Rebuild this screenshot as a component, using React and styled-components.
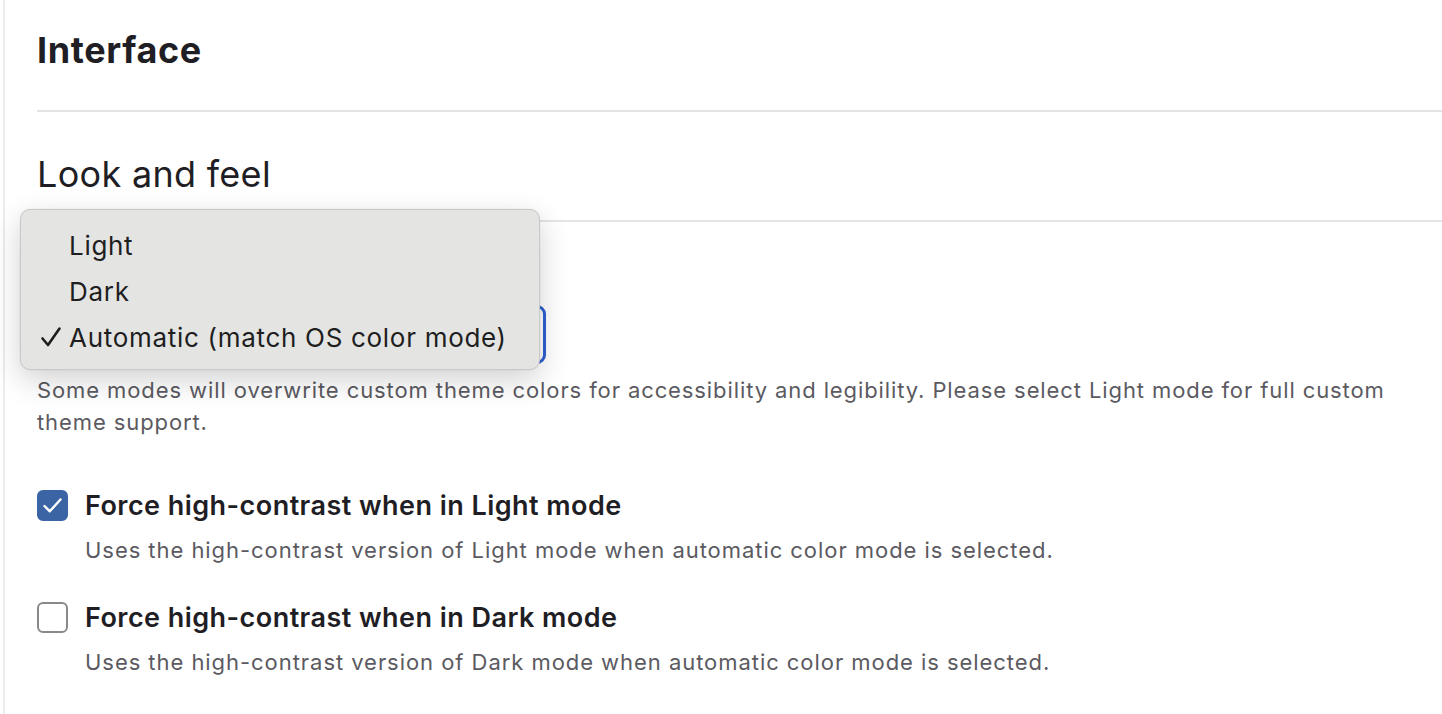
import React from 'react';
import styled, { createGlobalStyle } from 'styled-components';

const GlobalStyle = createGlobalStyle`
    * {
        box-sizing: border-box;
    }

    body {
        margin: 0;
        background: #fff;
        font-family: Inter, "Noto Sans", sans-serif;
        color: #1f1e24;
    }
`;

const modes = ['Light', 'Dark', 'Automatic (match OS color mode)'];

const checks = [
    {
        label: 'Force high-contrast when in Light mode',
        help: 'Uses the high-contrast version of Light mode when automatic color mode is selected.',
        checked: true,
    },
    {
        label: 'Force high-contrast when in Dark mode',
        help: 'Uses the high-contrast version of Dark mode when automatic color mode is selected.',
        checked: false,
    },
];

const CheckIcon = () => (
    <svg width="21" height="17" viewBox="0 0 21 17" fill="none">
        <path d="M2.5 9L7.8 14.3L18.5 2.5" stroke="#fff" strokeWidth="2.4" strokeLinecap="round" strokeLinejoin="round" />
    </svg>
);

const MenuTick = () => (
    <svg width="22" height="22" viewBox="0 0 22 22" fill="none">
        <path d="M2.5 12.5L8 19L19.5 2.5" stroke="#1e1e1e" strokeWidth="2.6" strokeLinecap="round" strokeLinejoin="round" />
    </svg>
);

const App = () => {
    const selected = modes.length - 1;

    return <Page>
        <GlobalStyle />
        <SectionTitle>Interface</SectionTitle>
        <SubTitle>Look and feel</SubTitle>

        <FormGroup>
            <FieldLabel>Color mode</FieldLabel>
            <SelectWrap>
                <Select>
                    <span>{modes[selected]}</span>
                    <svg width="16" height="16" viewBox="0 0 16 16">
                        <path d="M4 6l4 4 4-4" stroke="#1f1e24" strokeWidth="1.6" fill="none" />
                    </svg>
                </Select>
                <Menu>
                    {modes.map((mode, i) => (
                        <MenuItem key={mode}>
                            {i === selected && <MenuCheck><MenuTick /></MenuCheck>}
                            {mode}
                        </MenuItem>
                    ))}
                </Menu>
            </SelectWrap>
            <HelpText>
                Some modes will overwrite custom theme colors for accessibility and legibility. Please select Light mode for full custom theme support.
            </HelpText>
        </FormGroup>

        <CheckList>
            {checks.map(item => (
                <CheckRow key={item.label}>
                    <Box $checked={item.checked}>
                        {item.checked && <CheckIcon />}
                    </Box>
                    <div>
                        <CheckLabel>{item.label}</CheckLabel>
                        <CheckHelp>{item.help}</CheckHelp>
                    </div>
                </CheckRow>
            ))}
        </CheckList>
    </Page>;
};

const Page = styled.div`
    margin-left: 3px;
    min-height: 714px;
    border-left: 2px solid #ececec;
    padding: 28px 0 0 32px;
`;

const SectionTitle = styled.h2`
    margin: 0;
    font-size: 36px;
    line-height: 45px;
    font-weight: 700;
    letter-spacing: 0.6px;
    padding-bottom: 37px;
    border-bottom: 2px solid #e4e4e6;
`;

const SubTitle = styled.h3`
    margin: 40px 0 0;
    font-size: 36px;
    line-height: 45px;
    font-weight: 400;
    letter-spacing: 0.3px;
    padding-bottom: 23px;
    border-bottom: 2px solid #e4e4e6;
`;

const FormGroup = styled.div`
    padding-top: 32px;
`;

const FieldLabel = styled.div`
    font-size: 26px;
    line-height: 36px;
    font-weight: 600;
    margin-bottom: 15px;
`;

const SelectWrap = styled.div`
    position: relative;
    width: 509px;
`;

const Select = styled.div`
    height: 59px;
    border: 3px solid #2f5fd0;
    border-radius: 9px;
    display: flex;
    align-items: center;
    justify-content: space-between;
    padding: 0 16px;
    font-size: 22px;
`;

const Menu = styled.div`
    position: absolute;
    left: -17px;
    top: -96px;
    width: 520px;
    padding: 12px 0 9px;
    background: #e4e4e3;
    border: 1px solid #c9c9c9;
    border-radius: 10px;
    box-shadow: 0 10px 30px rgba(0, 0, 0, 0.18), 0 0 2px rgba(0, 0, 0, 0.08);
`;

const MenuItem = styled.div`
    position: relative;
    height: 46px;
    display: flex;
    align-items: center;
    padding-left: 48px;
    font-size: 26px;
    color: #1e1e1e;
    letter-spacing: 0.7px;
`;

const MenuCheck = styled.span`
    position: absolute;
    left: 19px;
    top: 12px;
    display: flex;
`;

const HelpText = styled.p`
    margin: 10px 0 0;
    font-size: 22px;
    line-height: 32px;
    letter-spacing: 0.9px;
    color: #5b5a61;
`;

const CheckList = styled.div`
    margin-top: 50px;
    display: flex;
    flex-direction: column;
    gap: 34px;
`;

const CheckRow = styled.div`
    display: flex;
    gap: 17px;
`;

const Box = styled.div`
    flex: none;
    width: 31px;
    height: 31px;
    margin-top: 2px;
    border-radius: 6px;
    display: flex;
    align-items: center;
    justify-content: center;
    background: ${p => (p.$checked ? '#3a64a4' : '#fff')};
    border: 2px solid ${p => (p.$checked ? '#3a64a4' : '#89888d')};
`;

const CheckLabel = styled.div`
    font-size: 27px;
    line-height: 36px;
    font-weight: 600;
    letter-spacing: 0.45px;
`;

const CheckHelp = styled.div`
    margin-top: 10px;
    font-size: 22px;
    line-height: 32px;
    letter-spacing: 0.95px;
    color: #5b5a61;
`;

export default App;
